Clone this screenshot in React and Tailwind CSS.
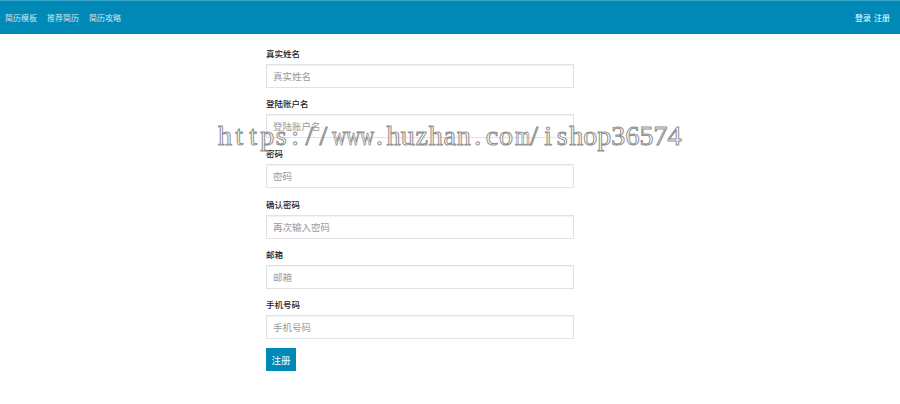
import React from "react";

const fields = [
  { label: "真实姓名", ph: "真实姓名" },
  { label: "登陆账户名", ph: "登陆账户名" },
  { label: "密码", ph: "密码" },
  { label: "确认密码", ph: "再次输入密码" },
  { label: "邮箱", ph: "邮箱" },
  { label: "手机号码", ph: "手机号码" },
];

const mark = "https://www.huzhan.com/ishop36574";

const App = () => {
  return (
    <div
      className="relative w-[900px] h-[404px] bg-white"
      style={{ fontFamily: '"Noto Sans CJK SC", "Liberation Sans", sans-serif' }}
    >
      {/* nav */}
      <nav className="h-[34px] bg-[#0089b7] border-t border-[#3aa7cc] flex items-center justify-between px-[5px] text-[8px]">
        <div className="flex gap-[10px] text-[#cfe8f2]">
          <a href="#">简历模板</a>
          <a href="#">推荐简历</a>
          <a href="#">简历攻略</a>
        </div>
        <div className="flex gap-[3px] text-white pr-[5px]">
          <a href="#">登录</a>
          <a href="#">注册</a>
        </div>
      </nav>

      {/* form */}
      <form className="ml-[266px] w-[308px] pt-[13px]">
        {fields.map((f) => (
          <div key={f.label} className="mb-[9.2px]">
            <label className="block h-[12px] leading-[12px] mb-[5px] text-[8.5px] font-medium text-[#222]">
              {f.label}
            </label>
            <input
              placeholder={f.ph}
              className="block w-full h-[24px] px-[6px] text-[9.5px] border border-[#e2e2e2] shadow-[inset_0_1px_1px_rgba(0,0,0,0.05)] outline-none placeholder:text-[#9a9a9a]"
            />
          </div>
        ))}
        <button
          type="button"
          className="block h-[23px] w-[30px] bg-[#0089b7] text-white text-[9.5px]"
        >
          注册
        </button>
      </form>

      {/* watermark */}
      <div
        className="absolute left-[218px] top-[122px] flex text-[28px] leading-[28px] text-white pointer-events-none"
        style={{
          fontFamily: '"Liberation Serif", serif',
          WebkitTextStroke: "1px #8f8f8f",
        }}
      >
        {mark.split("").map((c, i) => (
          <span
            key={i}
            className={
              c === "w" || c === "m"
                ? "inline-block w-[14.06px] text-center scale-x-[0.7]"
                : "inline-block w-[14.06px] text-center"
            }
          >
            {c}
          </span>
        ))}
      </div>
    </div>
  );
};

export default App;
